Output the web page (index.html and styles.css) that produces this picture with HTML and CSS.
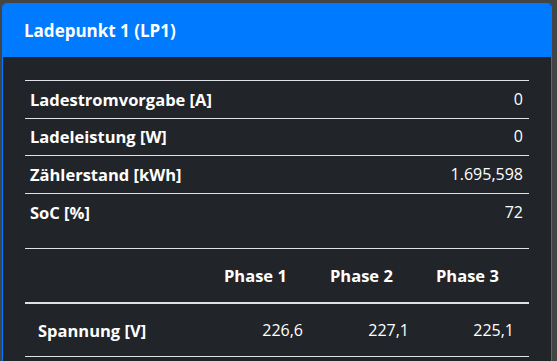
FILE: index.html
```html
<!DOCTYPE html>
<html lang="de">
<head>
<meta charset="UTF-8">
<meta name="viewport" content="width=device-width, initial-scale=1.0">
<title>Ladepunkt 1 (LP1)</title>
<link rel="stylesheet" href="styles.css">
</head>
<body>
<div class="card">
  <div class="card-header">Ladepunkt 1 (LP1)</div>
  <div class="card-body">
    <table class="info-table">
      <tbody>
        <tr>
          <th>Ladestromvorgabe [A]</th>
          <td>0</td>
        </tr>
        <tr>
          <th>Ladeleistung [W]</th>
          <td>0</td>
        </tr>
        <tr>
          <th>Zählerstand [kWh]</th>
          <td>1.695,598</td>
        </tr>
        <tr>
          <th>SoC [%]</th>
          <td>72</td>
        </tr>
      </tbody>
    </table>
    <table class="phase-table">
      <colgroup>
        <col class="col-label">
        <col class="col-phase">
        <col class="col-phase">
        <col>
      </colgroup>
      <thead>
        <tr>
          <th></th>
          <th>Phase 1</th>
          <th>Phase 2</th>
          <th>Phase 3</th>
        </tr>
      </thead>
      <tbody>
        <tr>
          <th>Spannung [V]</th>
          <td>226,6</td>
          <td>227,1</td>
          <td>225,1</td>
        </tr>
      </tbody>
    </table>
  </div>
</div>
</body>
</html>
```

FILE: styles.css
```css
body {
  font-family: "Open Sans", Arial, sans-serif;
  font-size: 16px;
  background-color: #444;
  color: white;
  margin: 0;
  padding: 3px 0 0 2px;
}

.card {
  width: 550px;
  box-sizing: border-box;
  border: 1px solid #007bff;
  border-radius: 4px;
  background-color: #212529;
  overflow: hidden;
}

.card-header {
  background-color: #007bff;
  height: 53px;
  display: flex;
  align-items: center;
  padding: 0 21px;
  font-size: 17px;
  font-weight: bold;
}

.card-body {
  padding: 23px 22px;
}

table {
  width: 100%;
  border-collapse: collapse;
}

th, td {
  line-height: 27px;
  border-top: 1px solid #dee2e6;
}

th {
  font-size: 16.5px;
}

.info-table {
  margin-bottom: 18px;
}

.info-table th,
.info-table td {
  padding: 4.8px 5px;
}

.info-table th {
  text-align: left;
}

.info-table td {
  text-align: right;
  padding-right: 6px;
}

.phase-table {
  table-layout: fixed;
}

.col-label {
  width: 187px;
}

.col-phase {
  width: 106px;
}

.phase-table thead th {
  text-align: left;
  padding: 13px 12px;
  border-bottom: 2px solid #dee2e6;
}

.phase-table tbody tr {
  border-bottom: 1px solid #dee2e6;
}

.phase-table tbody th,
.phase-table tbody td {
  padding: 13px 15px 12px 13px;
}

.phase-table tbody th {
  text-align: left;
}

.phase-table tbody td {
  text-align: right;
}
```
